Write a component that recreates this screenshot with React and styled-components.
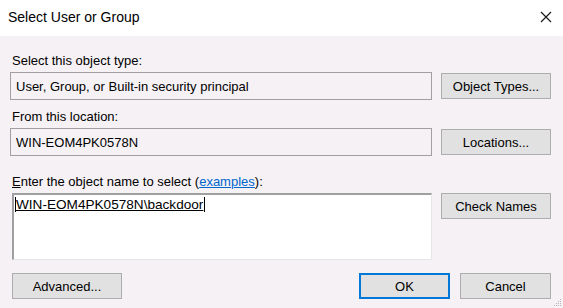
import React from 'react'
import styled, { createGlobalStyle } from 'styled-components'

const Global = createGlobalStyle`
  html, body {
    margin: 0;
    padding: 0;
    background: #f5f1f5;
  }
  * {
    box-sizing: border-box;
  }
`

function App() {
    return (
        <Window>
            <Global />
            <TitleBar>
                <Title>Select User or Group</Title>
                <CloseButton aria-label="Close">
                    <svg width="12" height="12" viewBox="0 0 12 12">
                        <path d="M1 1 L11 11 M11 1 L1 11" stroke="#1a1a1a" strokeWidth="1.2" />
                    </svg>
                </CloseButton>
            </TitleBar>

            <Body>
                <Label top={17}>Select this object type:</Label>
                <Row>
                    <ReadOnlyBox>User, Group, or Built-in security principal</ReadOnlyBox>
                    <Button>Object Types...</Button>
                </Row>

                <Label top={9}>From this location:</Label>
                <Row>
                    <ReadOnlyBox>WIN-EOM4PK0578N</ReadOnlyBox>
                    <Button>Locations...</Button>
                </Row>

                <Label top={18}>
                    <Key>E</Key>nter the object name to select (<Link>examples</Link>):
                </Label>
                <Row top>
                    <NameBox>
                        <Resolved>WIN-EOM4PK0578N\backdoor</Resolved>
                    </NameBox>
                    <Button>Check Names</Button>
                </Row>

                <Footer>
                    <Button>Advanced...</Button>
                    <FooterRight>
                        <Button primary>OK</Button>
                        <Button>Cancel</Button>
                    </FooterRight>
                </Footer>
            </Body>
            <Grip>
                <svg width="8" height="8" viewBox="0 0 8 8">
                    <rect x="6" y="0" width="1" height="1" fill="#b5b5b5" />
                    <rect x="4" y="2" width="1" height="1" fill="#b5b5b5" />
                    <rect x="6" y="2" width="1" height="1" fill="#b5b5b5" />
                    <rect x="2" y="4" width="1" height="1" fill="#b5b5b5" />
                    <rect x="4" y="4" width="1" height="1" fill="#b5b5b5" />
                    <rect x="6" y="4" width="1" height="1" fill="#b5b5b5" />
                    <rect x="0" y="6" width="1" height="1" fill="#b5b5b5" />
                    <rect x="2" y="6" width="1" height="1" fill="#b5b5b5" />
                    <rect x="4" y="6" width="1" height="1" fill="#b5b5b5" />
                    <rect x="6" y="6" width="1" height="1" fill="#b5b5b5" />
                </svg>
            </Grip>
        </Window>
    )
}

export default App

const Window = styled.div`
  position: relative;
  width: 563px;
  height: 308px;
  background: #f5f1f5;
  font-family: "Liberation Sans", Arial, sans-serif;
  font-size: 13px;
  color: #000;
  overflow: hidden;
`

const TitleBar = styled.div`
  height: 36px;
  background: #fff;
  display: flex;
  align-items: center;
  justify-content: space-between;
  padding: 0 11px 2px 8px;
`

const Title = styled.div`
  font-size: 14px;
  color: #000;
`

const CloseButton = styled.div`
  width: 12px;
  height: 12px;
  display: flex;
`

const Body = styled.div`
  padding: 0 12px 0 10px;
  display: flex;
  flex-direction: column;
`

const Label = styled.div`
  margin-top: ${p => p.top}px;
  padding-left: 2px;
  height: 16px;
  line-height: 16px;
  margin-bottom: 3px;
  white-space: nowrap;
`

const Key = styled.span`
  text-decoration: underline;
`

const Link = styled.span`
  color: #0066cc;
  text-decoration: underline;
`

const Row = styled.div`
  display: flex;
  align-items: ${p => (p.top ? 'flex-start' : 'center')};
  gap: 9px;
`

const ReadOnlyBox = styled.div`
  flex: 1;
  height: 28px;
  border: 1px solid #a0a0a0;
  background: #f5f1f5;
  display: flex;
  align-items: center;
  padding-left: 5px;
  white-space: nowrap;
`

const NameBox = styled.div`
  flex: 1;
  margin-left: 2px;
  height: 67px;
  background: #fff;
  border-top: 2px solid #a0a0a0;
  border-left: 2px solid #a0a0a0;
  border-right: 1px solid #e6e6e6;
  border-bottom: 1px solid #e6e6e6;
  padding: 2px 0 0 1px;
`

const Resolved = styled.span`
  display: inline-block;
  line-height: 15px;
  font-size: 13.6px;
  text-decoration: underline;
  border-left: 1px solid #000;
  border-right: 1px solid #000;
  padding-right: 1px;
  white-space: nowrap;
`

const Button = styled.div`
  width: ${p => (p.primary ? '91px' : '110px')};
  height: 26px;
  flex-shrink: 0;
  display: flex;
  align-items: center;
  justify-content: center;
  background: #e1e1e1;
  border: ${p => (p.primary ? '2px solid #0078d7' : '1px solid #adadad')};
  white-space: nowrap;
`

const Footer = styled.div`
  display: flex;
  justify-content: space-between;
  margin-top: 13px;
  padding-left: 2px;
`

const FooterRight = styled.div`
  display: flex;
  gap: 10px;

  & > div {
    width: 91px;
  }
`

const Grip = styled.div`
  position: absolute;
  right: 1px;
  bottom: 1px;
  width: 8px;
  height: 8px;
  display: flex;
`
